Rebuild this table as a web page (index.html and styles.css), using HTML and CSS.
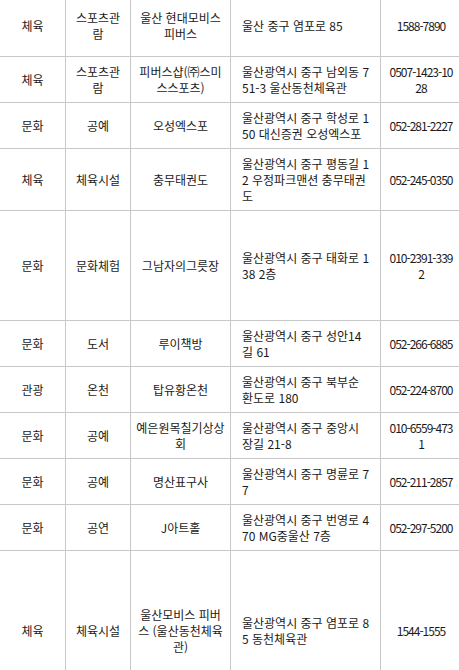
FILE: index.html
```html
<!DOCTYPE html>
<html lang="ko">
<head>
<meta charset="utf-8">
<title>울산 중구 시설 목록</title>
<link rel="stylesheet" href="styles.css">
</head>
<body>
<table class="list">
  <colgroup>
    <col class="c-type">
    <col class="c-cat">
    <col class="c-name">
    <col class="c-addr">
    <col class="c-tel">
  </colgroup>
  <tbody>
    <tr class="r62"><td>체육</td><td>스포츠관람</td><td>울산 현대모비스 피버스</td><td class="addr">울산 중구 염포로 85</td><td class="tel">1588-7890</td></tr>
    <tr class="r46"><td>체육</td><td>스포츠관람</td><td>피버스샵(㈜스미스스포츠)</td><td class="addr">울산광역시 중구 남외동 751-3 울산동천체육관</td><td class="tel">0507-1423-1028</td></tr>
    <tr class="r46"><td>문화</td><td>공예</td><td>오성엑스포</td><td class="addr">울산광역시 중구 학성로 150 대신증권 오성엑스포</td><td class="tel">052-281-2227</td></tr>
    <tr class="r62"><td>체육</td><td>체육시설</td><td>충무태권도</td><td class="addr">울산광역시 중구 평동길 12 우정파크맨션 충무태권도</td><td class="tel">052-245-0350</td></tr>
    <tr class="r110"><td>문화</td><td>문화체험</td><td>그남자의그릇장</td><td class="addr">울산광역시 중구 태화로 138 2층</td><td class="tel">010-2391-3392</td></tr>
    <tr class="r46"><td>문화</td><td>도서</td><td>루이책방</td><td class="addr">울산광역시 중구 성안14길 61</td><td class="tel">052-266-6885</td></tr>
    <tr class="r46"><td>관광</td><td>온천</td><td>탑유황온천</td><td class="addr">울산광역시 중구 북부순환도로 180</td><td class="tel">052-224-8700</td></tr>
    <tr class="r46"><td>문화</td><td>공예</td><td>예은원목칠기상상회</td><td class="addr">울산광역시 중구 중앙시장길 21-8</td><td class="tel">010-6559-4731</td></tr>
    <tr class="r46"><td>문화</td><td>공예</td><td>명산표구사</td><td class="addr">울산광역시 중구 명륜로 77</td><td class="tel">052-211-2857</td></tr>
    <tr class="r46"><td>문화</td><td>공연</td><td>J아트홀</td><td class="addr">울산광역시 중구 번영로 470 MG중울산 7층</td><td class="tel">052-297-5200</td></tr>
    <tr class="r160"><td>체육</td><td>체육시설</td><td>울산모비스 피버스 (울산동천체육관)</td><td class="addr">울산광역시 중구 염포로 85 동천체육관</td><td class="tel">1544-1555</td></tr>
  </tbody>
</table>
</body>
</html>
```
FILE: styles.css
```css
html {
  overflow: hidden;
  background: #fff;
}
body {
  margin: 0;
  font-family: "Noto Sans CJK KR", "Noto Sans", sans-serif;
  font-size: 12px;
  line-height: 16px;
  color: #1a1a1a;
}
.list {
  border-collapse: collapse;
  table-layout: fixed;
  width: 462px;
  margin: -6px 0 0 -1px;
}
.c-type { width: 66px; }
.c-cat { width: 65px; }
.c-name { width: 100px; }
.c-addr { width: 150px; }
.c-tel { width: 81px; }
.list td {
  border: 1px solid #c8c8c8;
  padding: 0 5px;
  text-align: center;
  vertical-align: middle;
  word-break: break-all;
}
.list td.addr {
  text-align: left;
  padding: 0 10.5px 0 11px;
}
.list td.tel {
  padding: 0 6px;
  letter-spacing: -1px;
}
.r46 { height: 46px; }
.r62 { height: 62px; }
.r110 { height: 110px; }
.r160 { height: 160px; }
```
